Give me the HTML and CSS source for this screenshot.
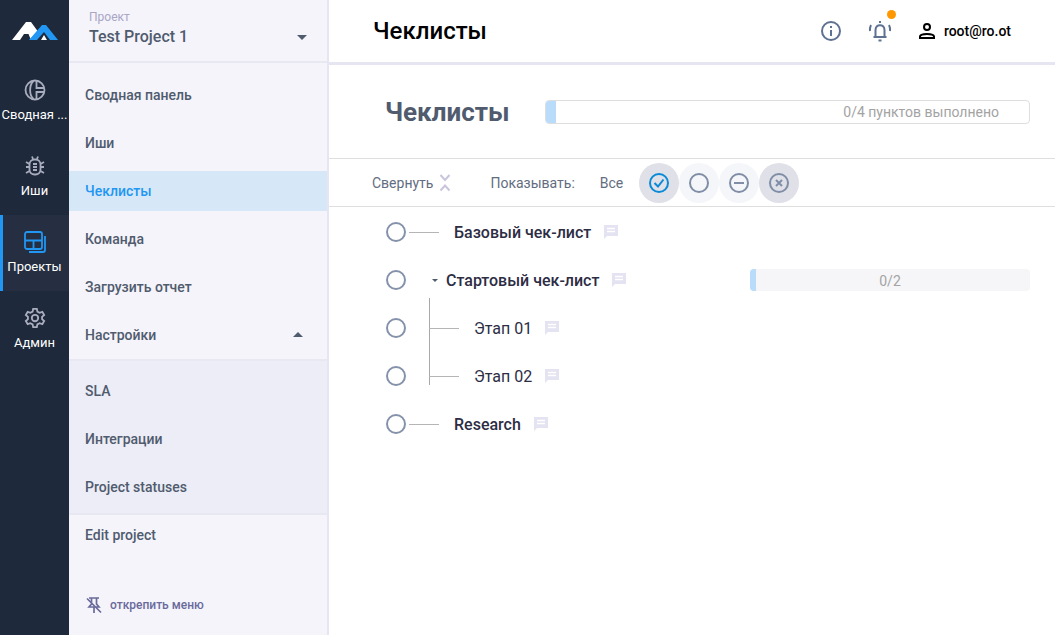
FILE: index.html
```html
<!DOCTYPE html>
<html lang="ru">
<head>
    <meta charset="UTF-8">
    <title>Чеклисты</title>
    <link rel="stylesheet" href="styles.css">
</head>
<body>
    <div class="app">
        <nav class="rail">
            <div class="logo">
                <svg width="46" height="24" viewBox="0 0 46 24">
                    <path fill="#fff" d="M0 21 L14 3 H19 L27 14 L21 21 H19 L16.500 15 H12 L8 21 Z"/>
                    <path fill="#2196f3" d="M17 21 L30 6 H34 L46 21 H38 L32 13 L25 21 Z"/>
                    <path fill="#fff" d="M29 21 L32 16 L35 21 Z"/>
                </svg>
            </div>
            <a class="rail-item">
                <svg width="22" height="22" viewBox="0 0 22 22" fill="none" stroke="#a9adbd" stroke-width="1.800"><circle cx="11" cy="11" r="9.500"/><path d="M9.500 2 C5 6 5 16 9.500 20 M12.500 2 V9 H20 M12.500 20 V13 H20"/></svg>
                <span>Сводная ...</span>
            </a>
            <a class="rail-item">
                <svg width="22" height="22" viewBox="0 0 22 22" fill="none" stroke="#a9adbd" stroke-width="1.800"><rect x="5.500" y="4.500" width="11" height="15" rx="5"/><path d="M9 9 H13 M9 12 H13 M9 15 H13 M8 1.500 L9 4 M14 1.500 L13 4 M2 7 L5.500 9 M20 7 L16.500 9 M2 12 H5.500 M20 12 H16.500 M2 18 L5.500 16 M20 18 L16.500 16"/></svg>
                <span>Иши</span>
            </a>
            <a class="rail-item active">
                <svg width="22" height="22" viewBox="0 0 22 22" fill="none" stroke="#2196f3" stroke-width="1.800"><rect x="1" y="1" width="17" height="17" rx="2"/><path d="M1 9.500 H18 M9.500 9.500 V18 M21 5 V19 Q21 21 19 21 H5"/></svg>
                <span>Проекты</span>
            </a>
            <a class="rail-item">
                <svg width="22" height="22" viewBox="0 0 24 24" fill="none" stroke="#a9adbd" stroke-width="2"><circle cx="12" cy="12" r="3.500"/><path d="M10 2 H14 L14.600 5 L17 6.300 L20 5.200 L22 8.800 L19.700 10.800 V13.200 L22 15.200 L20 18.800 L17 17.700 L14.600 19 L14 22 H10 L9.400 19 L7 17.700 L4 18.800 L2 15.200 L4.300 13.200 V10.800 L2 8.800 L4 5.200 L7 6.300 L9.400 5 Z"/></svg>
                <span>Админ</span>
            </a>
        </nav>

        <aside class="side">
            <div class="project">
                <div class="project-label">Проект</div>
                <div class="project-name">Test Project 1</div>
                <i class="caret-down"></i>
            </div>
            <ul class="menu">
                <li>Сводная панель</li>
                <li>Иши</li>
                <li class="current">Чеклисты</li>
                <li>Команда</li>
                <li>Загрузить отчет</li>
                <li class="has-sub">Настройки <i class="caret-up"></i></li>
            </ul>
            <ul class="menu submenu">
                <li>SLA</li>
                <li>Интеграции</li>
                <li>Project statuses</li>
            </ul>
            <ul class="menu editmenu">
                <li>Edit project</li>
            </ul>
            <div class="unpin">
                <svg width="18" height="18" viewBox="0 0 18 18" fill="none" stroke="#6a6a9c" stroke-width="1.700"><path d="M4 2 H14 M6.500 2 V8 L4 11 H14 L11.500 8 V2 M9 11 V17 M2 2.500 L16 16.500"/></svg>
                <span>открепить меню</span>
            </div>
        </aside>

        <main class="main">
            <header class="topbar">
                <div class="topbar-title">Чеклисты</div>
                <svg class="info-icon" width="22" height="22" viewBox="0 0 22 22" fill="none" stroke="#5f7191" stroke-width="2"><circle cx="11" cy="11" r="9"/><path d="M11 10 V16 M11 6 V8"/></svg>
                <div class="bell">
                    <svg width="24" height="24" viewBox="0 0 24 24" fill="none" stroke="#5f7191" stroke-width="2"><path d="M5.500 18 H18.500 M7.500 18 V11 C7.500 4.500 16.500 4.500 16.500 11 V18 M10.500 21.500 H13.500 M12 2 V4 M3 6 Q1.500 9 2 12 M21 6 Q22.500 9 22 12"/></svg>
                    <i class="bell-dot"></i>
                </div>
                <div class="user">
                    <svg width="18" height="18" viewBox="0 0 18 18" fill="none" stroke="#000" stroke-width="2"><circle cx="9" cy="5" r="3"/><path d="M2 16 V14.500 C2 11 16 11 16 14.500 V16 Z"/></svg>
                    <span>root@ro.ot</span>
                </div>
            </header>

            <section class="summary">
                <h1>Чеклисты</h1>
                <div class="progress">
                    <div class="progress-fill"></div>
                    <span>0/4 пунктов выполнено</span>
                </div>
            </section>

            <section class="toolbar">
                <span class="collapse">Свернуть</span>
                <svg class="collapse-icon" width="12" height="20" viewBox="0 0 12 20" fill="none" stroke="#c9c5dc" stroke-width="2"><path d="M1.500 2 L6 7 L10.500 2 M1.500 17.500 L6 12.500 L10.500 17.500"/></svg>
                <span class="show-label">Показывать:</span>
                <span class="show-all">Все</span>
                <div class="filters">
                    <span class="filter on"><svg width="22" height="22" viewBox="0 0 22 22" fill="none" stroke="#0a8ad6" stroke-width="2"><circle cx="11" cy="11" r="9"/><path d="M6.500 11 L10 14.500 L15.500 7.500"/></svg></span>
                    <span class="filter"><svg width="22" height="22" viewBox="0 0 22 22" fill="none" stroke="#7f8ea6" stroke-width="2"><circle cx="11" cy="11" r="9"/></svg></span>
                    <span class="filter"><svg width="22" height="22" viewBox="0 0 22 22" fill="none" stroke="#7f8ea6" stroke-width="2"><circle cx="11" cy="11" r="9"/><path d="M6 11 H16"/></svg></span>
                    <span class="filter on"><svg width="22" height="22" viewBox="0 0 22 22" fill="none" stroke="#7f8ea6" stroke-width="2"><circle cx="11" cy="11" r="9"/><path d="M8 8 L14 14 M14 8 L8 14"/></svg></span>
                </div>
            </section>

            <section class="list">
                <div class="row">
                    <i class="radio"></i><i class="dash"></i>
                    <span class="row-name strong first">Базовый чек-лист</span>
                    <svg class="note" width="16" height="16" viewBox="0 0 16 16"><path fill="#e4e3f1" d="M1 1 H15 V12 H4 L1 15 Z"/><path stroke="#fff" stroke-width="1.300" d="M4 4.500 H12 M4 7.500 H12"/></svg>
                </div>
                <div class="row">
                    <i class="radio"></i>
                    <i class="tree-caret"></i>
                    <span class="row-name strong">Стартовый чек-лист</span>
                    <svg class="note" width="16" height="16" viewBox="0 0 16 16"><path fill="#e4e3f1" d="M1 1 H15 V12 H4 L1 15 Z"/><path stroke="#fff" stroke-width="1.300" d="M4 4.500 H12 M4 7.500 H12"/></svg>
                    <div class="row-progress">
                        <div class="row-progress-fill"></div>
                        <span>0/2</span>
                    </div>
                </div>
                <div class="children">
                    <div class="row">
                        <i class="radio"></i><i class="branch"></i>
                        <span class="row-name">Этап 01</span>
                        <svg class="note" width="16" height="16" viewBox="0 0 16 16"><path fill="#e4e3f1" d="M1 1 H15 V12 H4 L1 15 Z"/><path stroke="#fff" stroke-width="1.300" d="M4 4.500 H12 M4 7.500 H12"/></svg>
                    </div>
                    <div class="row">
                        <i class="radio"></i><i class="branch"></i>
                        <span class="row-name">Этап 02</span>
                        <svg class="note" width="16" height="16" viewBox="0 0 16 16"><path fill="#e4e3f1" d="M1 1 H15 V12 H4 L1 15 Z"/><path stroke="#fff" stroke-width="1.300" d="M4 4.500 H12 M4 7.500 H12"/></svg>
                    </div>
                </div>
                <div class="row">
                    <i class="radio"></i><i class="dash"></i>
                    <span class="row-name strong first">Research</span>
                    <svg class="note" width="16" height="16" viewBox="0 0 16 16"><path fill="#e4e3f1" d="M1 1 H15 V12 H4 L1 15 Z"/><path stroke="#fff" stroke-width="1.300" d="M4 4.500 H12 M4 7.500 H12"/></svg>
                </div>
            </section>
        </main>
    </div>
</body>
</html>
```
FILE: styles.css
```css
* {
    box-sizing: border-box;
}
html, body {
    margin: 0;
    height: 100%;
    overflow: hidden;
}
body {
    font-family: Roboto, "Liberation Sans", sans-serif;
    background-color: white;
    color: #2d2d44;
}
ul {
    list-style: none;
    margin: 0;
    padding: 0;
}
.app {
    display: flex;
    height: 635px;
}

/* dark rail */
.rail {
    width: 69px;
    flex-shrink: 0;
    background-color: #1e293b;
}
.logo {
    height: 63px;
    display: flex;
    justify-content: center;
    padding-top: 19px;
    padding-right: 0;
}
.rail-item {
    height: 76px;
    display: flex;
    flex-direction: column;
    align-items: center;
    padding-top: 16px;
    color: white;
    font-size: 13px;
    line-height: 15px;
}
.rail-item svg {
    margin-bottom: 6px;
}
.rail-item span {
    white-space: nowrap;
}
.rail-item.active {
    background-color: #262f42;
    border-left: 3px solid #2196f3;
    padding-right: 3px;
}

/* project menu */
.side {
    width: 260px;
    flex-shrink: 0;
    background-color: #f4f4fa;
    border-right: 2px solid #e6e6f2;
    position: relative;
}
.project {
    height: 63px;
    border-bottom: 2px solid #e8e8f2;
    padding: 10px 20px;
    position: relative;
}
.project-label {
    font-size: 12px;
    line-height: 14px;
    color: #a9a6c6;
}
.project-name {
    font-size: 16px;
    line-height: 20px;
    margin-top: 3px;
    font-weight: 500;
    color: #505b6e;
}
.caret-down {
    position: absolute;
    right: 20px;
    top: 35px;
    border-left: 5px solid transparent;
    border-right: 5px solid transparent;
    border-top: 5px solid #505b6e;
}
.menu {
    padding-top: 12px;
}
.menu li {
    height: 40px;
    margin-bottom: 8px;
    padding-left: 16px;
    display: flex;
    align-items: center;
    font-size: 14px;
    font-weight: 500;
    color: #505b6e;
}
.menu li.current {
    background-color: #d6e8f7;
    color: #2196f3;
}
.has-sub {
    position: relative;
}
.caret-up {
    position: absolute;
    right: 24px;
    top: 17px;
    border-left: 5px solid transparent;
    border-right: 5px solid transparent;
    border-bottom: 5px solid #505b6e;
}
.menu.submenu {
    background-color: #ecedf6;
    height: 156px;
    padding-top: 10px;
    border-top: 2px solid #e8e8f2;
    border-bottom: 2px solid #e8e8f2;
    margin-top: -4px;
}
.menu.editmenu {
    padding-top: 0;
}
.menu.editmenu li {
    height: 40px;
}
.unpin {
    position: absolute;
    left: 16px;
    top: 596px;
    display: flex;
    align-items: center;
    gap: 7px;
    font-size: 12px;
    font-weight: 500;
    color: #6a6a9c;
}

/* main part */
.main {
    flex: 1;
    min-width: 0;
}
.topbar {
    height: 65px;
    border-bottom: 3px solid #e6e6f2;
    display: flex;
    align-items: center;
    padding: 0 44px 0 44px;
}
.topbar-title {
    flex: 1;
    font-size: 24px;
    font-weight: 500;
    color: #000;
}
.info-icon {
    margin-right: 26px;
}
.bell {
    position: relative;
    width: 24px;
    height: 24px;
    margin-right: 26px;
}
.bell-dot {
    position: absolute;
    top: -9px;
    right: -4px;
    width: 9px;
    height: 9px;
    border-radius: 50%;
    background-color: #ff9800;
}
.user {
    display: flex;
    align-items: center;
    gap: 8px;
    font-size: 14px;
    font-weight: 500;
    color: #000;
}
.summary {
    height: 94px;
    border-bottom: 1px solid #dedede;
    display: flex;
    align-items: center;
    padding: 0 25px 0 56px;
}
.summary h1 {
    margin: 0 35px 0 0;
    font-size: 26px;
    font-weight: 700;
    color: #505b6e;
}
.progress {
    flex: 1;
    height: 24px;
    border: 1px solid #dedede;
    border-radius: 4px;
    position: relative;
    text-align: right;
    padding-right: 30px;
    font-size: 14px;
    line-height: 22px;
    color: #a3a3a3;
    overflow: hidden;
}
.progress-fill {
    position: absolute;
    left: 0;
    top: 0;
    bottom: 0;
    width: 10px;
    background-color: #b8dcfa;
}
.toolbar {
    height: 48px;
    border-bottom: 1px solid #dedede;
    display: flex;
    align-items: center;
    padding-left: 43px;
    font-size: 14px;
    color: #626d7f;
}
.collapse-icon {
    margin-left: 6px;
}
.show-label {
    margin-left: 39px;
}
.show-all {
    margin-left: 25px;
}
.filters {
    display: flex;
    margin-left: 16px;
}
.filter {
    width: 40px;
    height: 40px;
    border-radius: 50%;
    background-color: #f5f6f9;
    display: flex;
    align-items: center;
    justify-content: center;
}
.filter.on {
    background-color: #dfe0e8;
}
.list {
    padding-top: 1px;
}
.row {
    height: 48px;
    display: flex;
    align-items: center;
    padding-left: 57px;
    position: relative;
}
.radio {
    width: 20px;
    height: 20px;
    border: 2px solid #8493ab;
    border-radius: 50%;
    flex-shrink: 0;
}
.dash {
    width: 30px;
    height: 1px;
    margin-left: 3px;
    background-color: #b5b5b5;
}
.branch {
    width: 30px;
    height: 1px;
    margin-left: 23px;
    background-color: #b5b5b5;
}
.tree-caret {
    margin-left: 26px;
    margin-right: 8px;
    border-left: 3.500px solid transparent;
    border-right: 3.500px solid transparent;
    border-top: 3.500px solid #505b6e;
}
.row-name {
    font-size: 16px;
    color: #2d2d44;
    margin-left: 15px;
    white-space: nowrap;
}
.row-name.strong {
    font-weight: 500;
    margin-left: 0;
}
.row-name.first {
    margin-left: 15px;
}
.note {
    margin-left: 12px;
}
.row-progress {
    position: absolute;
    left: 421px;
    right: 25px;
    top: 13px;
    height: 22px;
    background-color: #f6f6f8;
    border-radius: 4px;
    overflow: hidden;
    text-align: center;
    font-size: 14px;
    line-height: 24px;
    color: #a3a3a3;
}
.row-progress-fill {
    position: absolute;
    left: 0;
    top: 0;
    bottom: 0;
    width: 6px;
    background-color: #b8dcfa;
}
.children {
    position: relative;
}
.children::before {
    content: "";
    position: absolute;
    left: 100px;
    top: -6px;
    height: 87px;
    width: 1px;
    background-color: #a8a8a8;
}
```
